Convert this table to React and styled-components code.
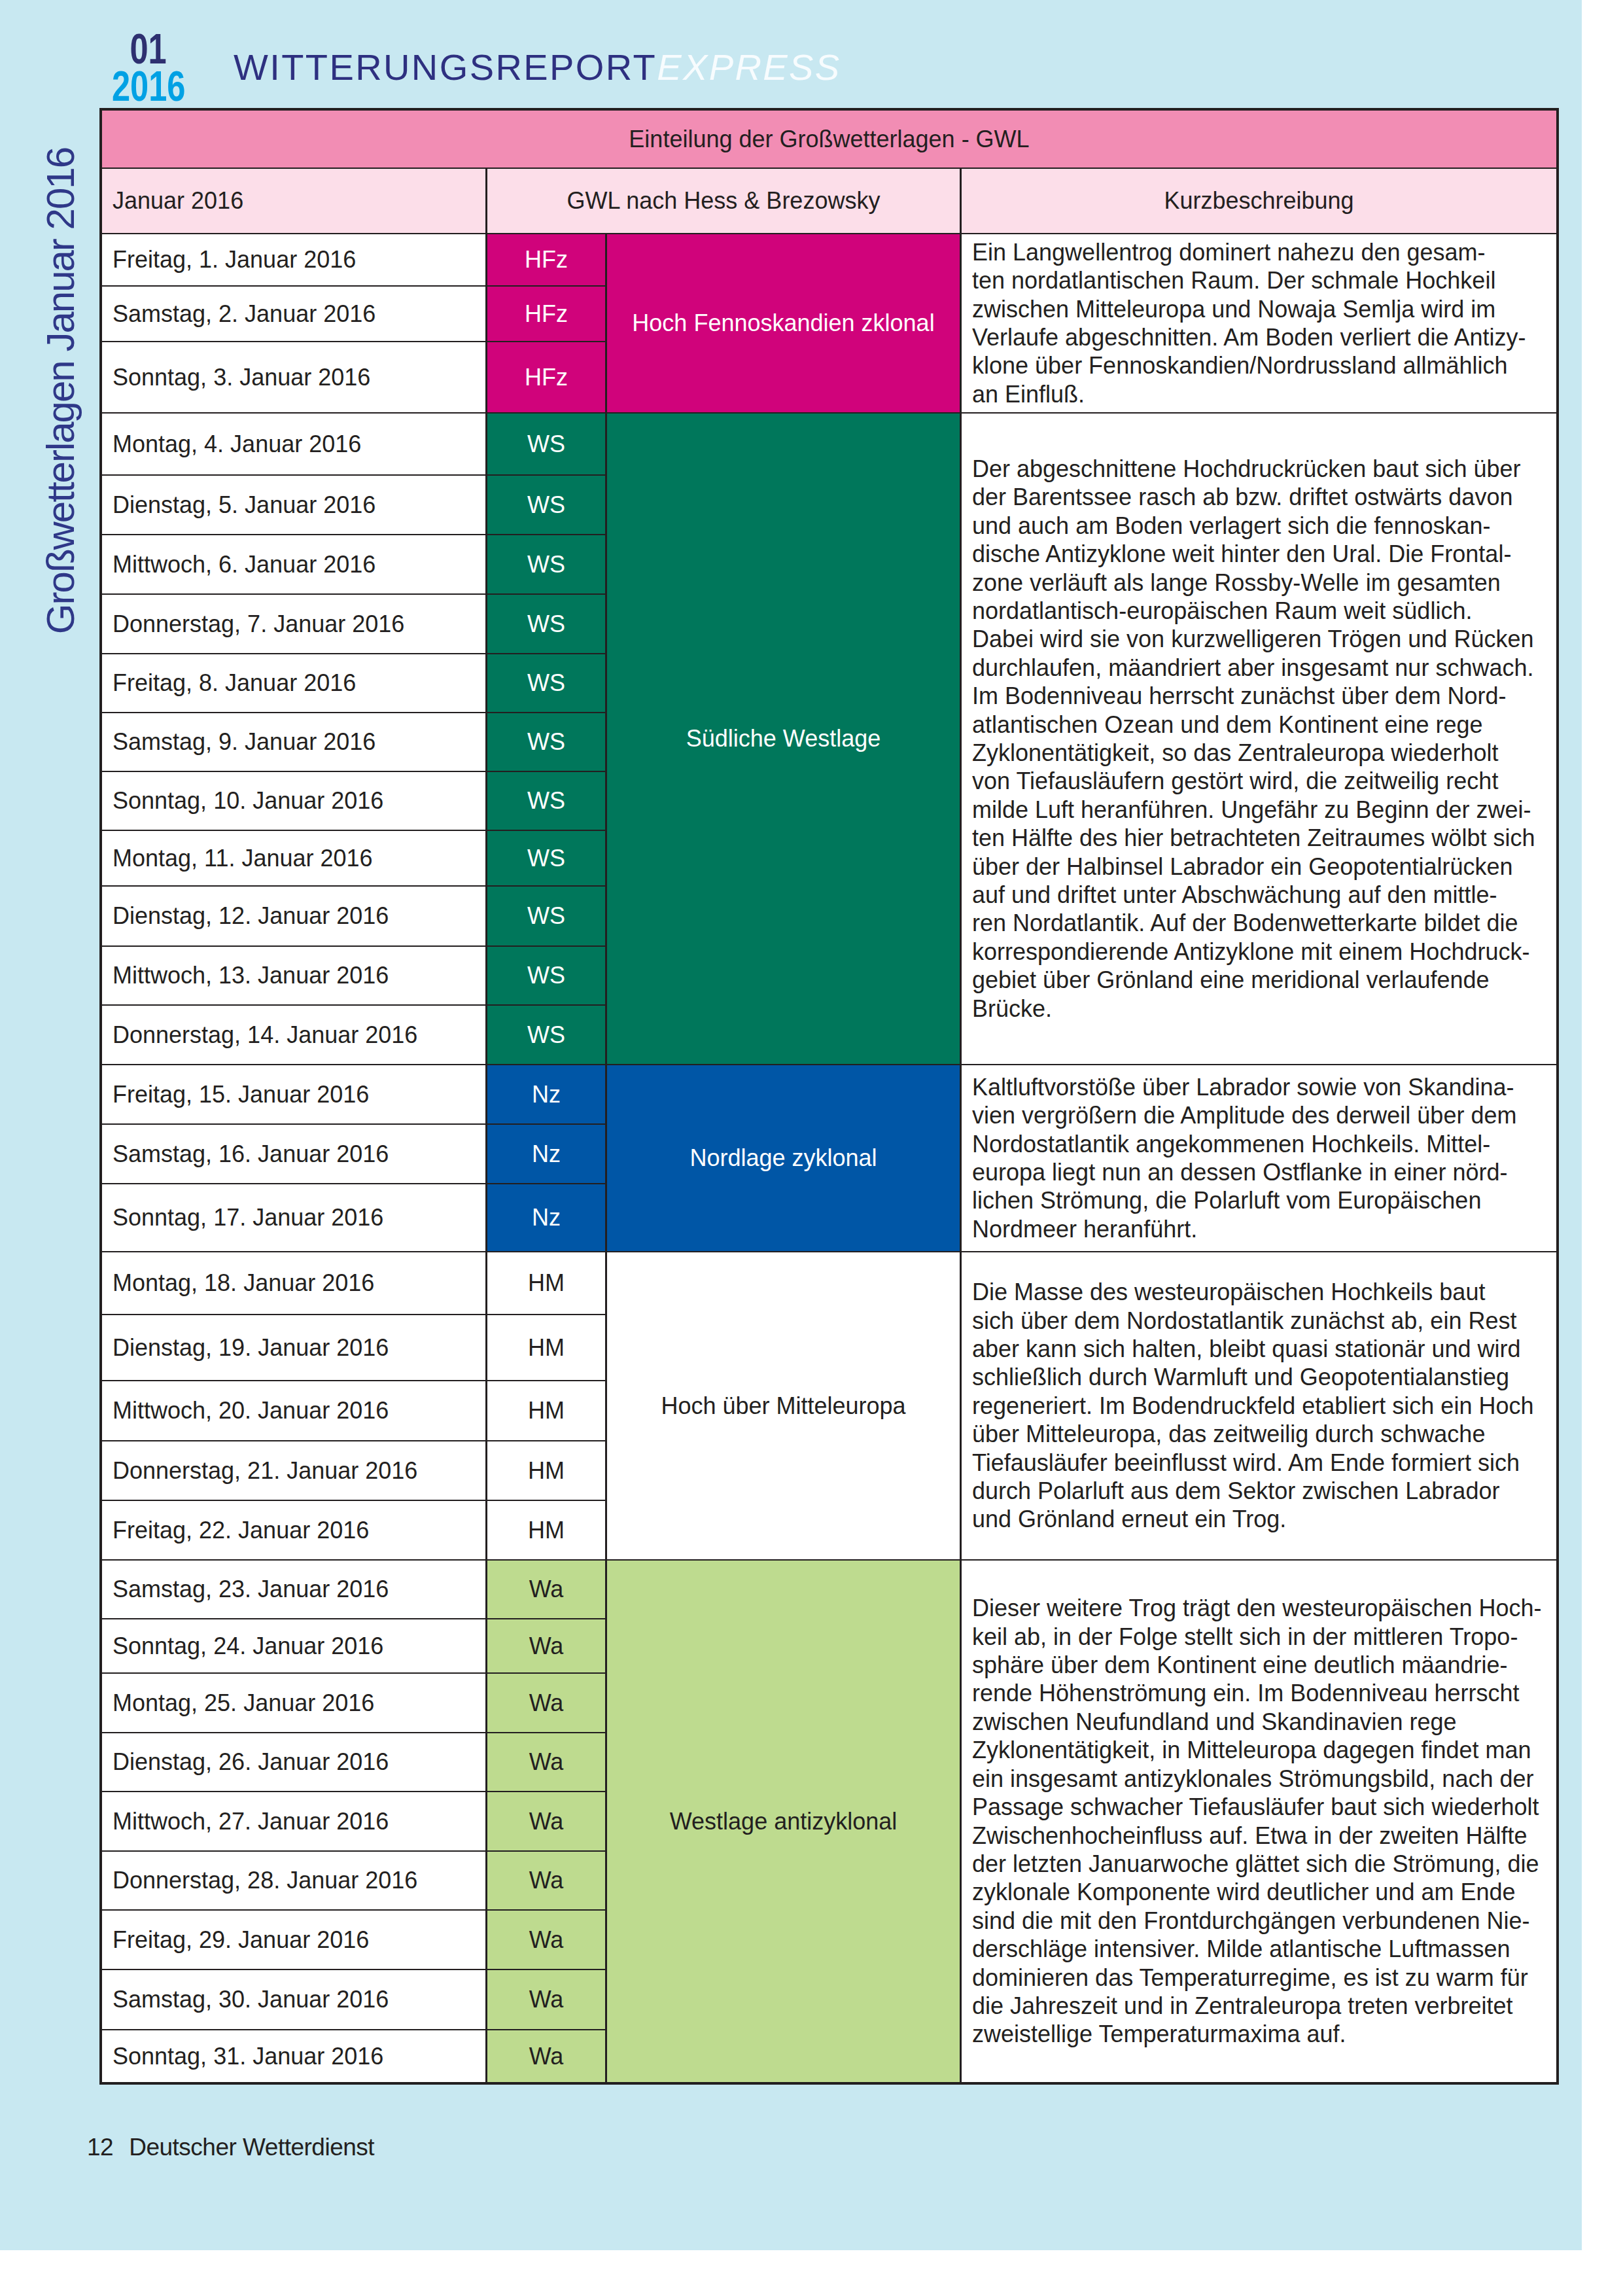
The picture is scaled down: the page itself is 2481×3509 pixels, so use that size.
import React from 'react';
import styled, { createGlobalStyle } from 'styled-components';

const GlobalStyle = createGlobalStyle`
  html, body {
    margin: 0;
    padding: 0;
    background: #ffffff;
  }
  body {
    font-family: "Liberation Sans", Arial, sans-serif;
    color: #231f20;
  }
`;

const Page = styled.div`
  width: 2481px;
  height: 3509px;
  background: #ffffff;
`;

const Sheet = styled.div`
  width: 2418px;
  height: 3439px;
  background: #c8e8f1;
  display: flex;
  flex-direction: column;
`;

const Masthead = styled.header`
  height: 165px;
  box-sizing: border-box;
  padding-left: 147px;
  display: flex;
  align-items: flex-start;
`;

const IssueStack = styled.div`
  width: 160px;
  margin-top: 47px;
  display: flex;
  flex-direction: column;
  align-items: center;
  font-size: 64px;
  line-height: 57px;
  font-weight: 700;
`;

const IssueNumber = styled.span`
  display: inline-block;
  color: ${p => p.$color};
  transform: scaleX(0.79);
`;

const Title = styled.h1`
  margin: 75px 0 0 50px;
  font-size: 56px;
  line-height: 56px;
  font-weight: 400;
  letter-spacing: 2.4px;
  color: #2e3080;
  white-space: nowrap;
  em {
    color: #f7fcfe;
    font-style: italic;
  }
`;

const Body = styled.div`
  display: flex;
  align-items: flex-start;
`;

const SideRail = styled.div`
  width: 152px;
  flex-shrink: 0;
`;

const SideLabel = styled.div`
  writing-mode: vertical-rl;
  transform: rotate(180deg);
  margin: 61px 0 0 63px;
  font-size: 60px;
  line-height: 60px;
  letter-spacing: -2px;
  color: #2f3888;
  white-space: nowrap;
`;

const Grid = styled.div`
  width: 2231px;
  box-sizing: border-box;
  border: 4px solid #231f20;
  background: #231f20;
  display: grid;
  grid-template-columns: 586px 180px 539px 909px;
  grid-template-rows: ${p => p.$rows.map(h => `${h}px`).join(' ')};
  column-gap: 3px;
  row-gap: 2px;
`;

const Cell = styled.div`
  grid-row: ${p => p.$row} / span ${p => p.$span || 1};
  grid-column: ${p => p.$col} / span ${p => p.$colSpan || 1};
  background: ${p => p.$bg || '#ffffff'};
  color: ${p => p.$fg || '#231f20'};
  display: flex;
  align-items: center;
  justify-content: center;
  font-size: 36px;
  white-space: nowrap;
  min-width: 0;
`;

const TitleCell = styled(Cell)`
  background: #f28db4;
`;

const HeadCell = styled(Cell)`
  background: #fcdee9;
  justify-content: ${p => (p.$left ? 'flex-start' : 'center')};
  padding-left: ${p => (p.$left ? '16px' : '0')};
`;

const DayCell = styled(Cell)`
  justify-content: flex-start;
  padding-left: 16px;
`;

const CodeCell = styled(Cell)``;

const GroupCell = styled(Cell)``;

const NoteCell = styled(Cell)`
  flex-direction: column;
  align-items: flex-start;
  justify-content: center;
  padding-left: 16px;
  line-height: 43.4px;
`;

const NoteLine = styled.span`
  display: block;
`;

const Footer = styled.footer`
  margin-top: 77px;
  padding-left: 133px;
  display: flex;
  gap: 24px;
  font-size: 37px;
  line-height: 37px;
  letter-spacing: -0.5px;
  color: #231f20;
`;

const weekdays = ['Freitag', 'Samstag', 'Sonntag', 'Montag', 'Dienstag', 'Mittwoch', 'Donnerstag'];

const rowHeights = [
  78, 83, 107,
  93, 89, 89, 89, 88, 88, 88, 83, 90, 88, 89,
  89, 89, 102,
  94, 99, 90, 89, 89,
  88, 81, 89, 88, 89, 88, 89, 90, 79,
];

const groups = [
  {
    code: 'HFz',
    name: 'Hoch Fennoskandien zklonal',
    from: 1,
    to: 3,
    bg: '#d0037b',
    fg: '#ffffff',
    lines: [
      'Ein Langwellentrog dominert nahezu den gesam-',
      'ten nordatlantischen Raum. Der schmale Hochkeil',
      'zwischen Mitteleuropa und Nowaja Semlja wird im',
      'Verlaufe abgeschnitten. Am Boden verliert die Antizy-',
      'klone über Fennoskandien/Nordrussland allmählich',
      'an Einfluß.',
    ],
  },
  {
    code: 'WS',
    name: 'Südliche Westlage',
    from: 4,
    to: 14,
    bg: '#00775b',
    fg: '#ffffff',
    lines: [
      'Der abgeschnittene Hochdruckrücken baut sich über',
      'der Barentssee rasch ab bzw. driftet ostwärts davon',
      'und auch am Boden verlagert sich die fennoskan-',
      'dische Antizyklone weit hinter den Ural. Die Frontal-',
      'zone verläuft als lange Rossby-Welle im gesamten',
      'nordatlantisch-europäischen Raum weit südlich.',
      'Dabei wird sie von kurzwelligeren Trögen und Rücken',
      'durchlaufen, mäandriert aber insgesamt nur schwach.',
      'Im Bodenniveau herrscht zunächst über dem Nord-',
      'atlantischen Ozean und dem Kontinent eine rege',
      'Zyklonentätigkeit, so das Zentraleuropa wiederholt',
      'von Tiefausläufern gestört wird, die zeitweilig recht',
      'milde Luft heranführen. Ungefähr zu Beginn der zwei-',
      'ten Hälfte des hier betrachteten Zeitraumes wölbt sich',
      'über der Halbinsel Labrador ein Geopotentialrücken',
      'auf und driftet unter Abschwächung auf den mittle-',
      'ren Nordatlantik. Auf der Bodenwetterkarte bildet die',
      'korrespondierende Antizyklone mit einem Hochdruck-',
      'gebiet über Grönland eine meridional verlaufende',
      'Brücke.',
    ],
  },
  {
    code: 'Nz',
    name: 'Nordlage zyklonal',
    from: 15,
    to: 17,
    bg: '#0056a6',
    fg: '#ffffff',
    lines: [
      'Kaltluftvorstöße über Labrador sowie von Skandina-',
      'vien vergrößern die Amplitude des derweil über dem',
      'Nordostatlantik angekommenen Hochkeils. Mittel-',
      'europa liegt nun an dessen Ostflanke in einer nörd-',
      'lichen Strömung, die Polarluft vom Europäischen',
      'Nordmeer heranführt.',
    ],
  },
  {
    code: 'HM',
    name: 'Hoch über Mitteleuropa',
    from: 18,
    to: 22,
    bg: '#ffffff',
    fg: '#231f20',
    lines: [
      'Die Masse des westeuropäischen Hochkeils baut',
      'sich über dem Nordostatlantik zunächst ab, ein Rest',
      'aber kann sich halten, bleibt quasi stationär und wird',
      'schließlich durch Warmluft und Geopotentialanstieg',
      'regeneriert. Im Bodendruckfeld etabliert sich ein Hoch',
      'über Mitteleuropa, das zeitweilig durch schwache',
      'Tiefausläufer beeinflusst wird. Am Ende formiert sich',
      'durch Polarluft aus dem Sektor zwischen Labrador',
      'und Grönland erneut ein Trog.',
    ],
  },
  {
    code: 'Wa',
    name: 'Westlage antizyklonal',
    from: 23,
    to: 31,
    bg: '#bedb8f',
    fg: '#231f20',
    lines: [
      'Dieser weitere Trog trägt den westeuropäischen Hoch-',
      'keil ab, in der Folge stellt sich in der mittleren Tropo-',
      'sphäre über dem Kontinent eine deutlich mäandrie-',
      'rende Höhenströmung ein. Im Bodenniveau herrscht',
      'zwischen Neufundland und Skandinavien rege',
      'Zyklonentätigkeit, in Mitteleuropa dagegen findet man',
      'ein insgesamt antizyklonales Strömungsbild, nach der',
      'Passage schwacher Tiefausläufer baut sich wiederholt',
      'Zwischenhocheinfluss auf. Etwa in der zweiten Hälfte',
      'der letzten Januarwoche glättet sich die Strömung, die',
      'zyklonale Komponente wird deutlicher und am Ende',
      'sind die mit den Frontdurchgängen verbundenen Nie-',
      'derschläge intensiver. Milde atlantische Luftmassen',
      'dominieren das Temperaturregime, es ist zu warm für',
      'die Jahreszeit und in Zentraleuropa treten verbreitet',
      'zweistellige Temperaturmaxima auf.',
    ],
  },
];

// header takes the first two grid rows
const FIRST_DAY_ROW = 3;

function groupOf(day) {
  return groups.find(g => day >= g.from && day <= g.to);
}

export default function App() {
  const days = Array.from({ length: 31 }, (_, i) => i + 1);

  return (
    <Page>
      <GlobalStyle />
      <Sheet>
        <Masthead>
          <IssueStack>
            <IssueNumber $color="#2e3070">01</IssueNumber>
            <IssueNumber $color="#00a1e4">2016</IssueNumber>
          </IssueStack>
          <Title>
            WITTERUNGSREPORT<em>EXPRESS</em>
          </Title>
        </Masthead>

        <Body>
          <SideRail>
            <SideLabel>Großwetterlagen Januar 2016</SideLabel>
          </SideRail>

          <Grid $rows={[87, 98, ...rowHeights]}>
            <TitleCell $row={1} $col={1} $colSpan={4}>
              Einteilung der Großwetterlagen - GWL
            </TitleCell>
            <HeadCell $row={2} $col={1} $left>
              Januar 2016
            </HeadCell>
            <HeadCell $row={2} $col={2} $colSpan={2}>
              GWL nach Hess &amp; Brezowsky
            </HeadCell>
            <HeadCell $row={2} $col={4}>
              Kurzbeschreibung
            </HeadCell>

            {days.map(day => {
              const g = groupOf(day);
              const row = FIRST_DAY_ROW + day - 1;
              return (
                <React.Fragment key={day}>
                  <DayCell $row={row} $col={1}>
                    {`${weekdays[(day - 1) % 7]}, ${day}. Januar 2016`}
                  </DayCell>
                  <CodeCell $row={row} $col={2} $bg={g.bg} $fg={g.fg}>
                    {g.code}
                  </CodeCell>
                </React.Fragment>
              );
            })}

            {groups.map(g => {
              const row = FIRST_DAY_ROW + g.from - 1;
              const span = g.to - g.from + 1;
              return (
                <React.Fragment key={g.code}>
                  <GroupCell $row={row} $span={span} $col={3} $bg={g.bg} $fg={g.fg}>
                    {g.name}
                  </GroupCell>
                  <NoteCell $row={row} $span={span} $col={4}>
                    {g.lines.map((line, i) => (
                      <NoteLine key={i}>{line}</NoteLine>
                    ))}
                  </NoteCell>
                </React.Fragment>
              );
            })}
          </Grid>
        </Body>

        <Footer>
          <span>12</span>
          <span>Deutscher Wetterdienst</span>
        </Footer>
      </Sheet>
    </Page>
  );
}
